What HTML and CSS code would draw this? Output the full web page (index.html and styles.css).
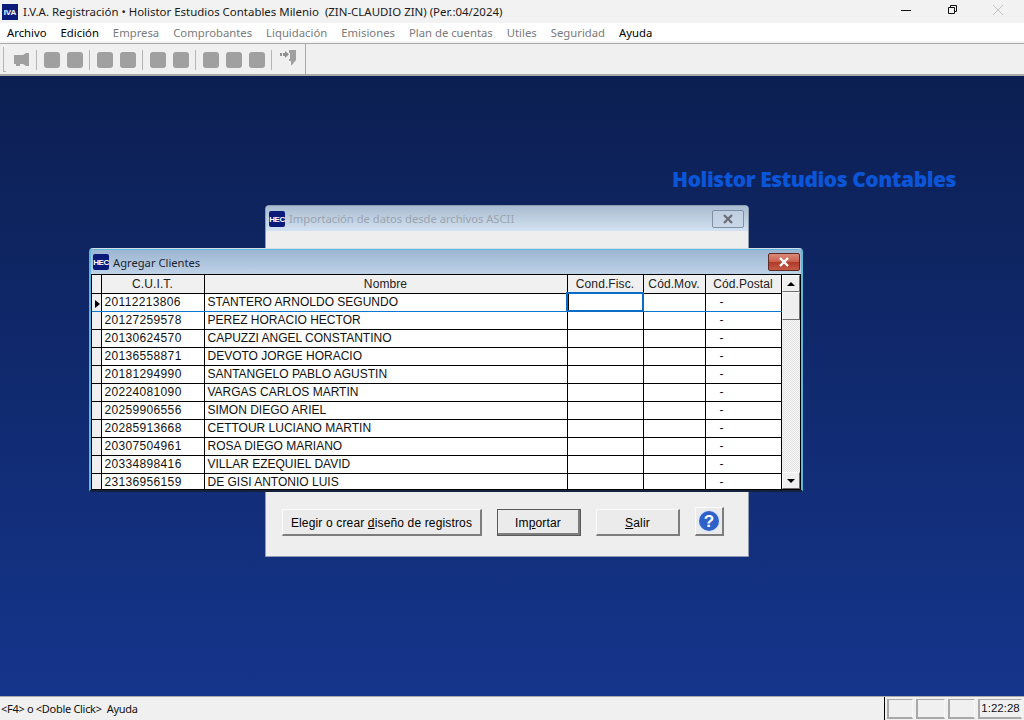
FILE: index.html
```html
<!DOCTYPE html>
<html>
<head>
  <title>I.V.A. Registración</title>
  <link rel="stylesheet" href="styles.css">
</head>
<body>
  <div class="app">
    <div class="titlebar">
      <span class="app-icon">IVA</span>
      <span class="title-text">I.V.A. Registración • Holistor Estudios Contables Milenio &nbsp;(ZIN-CLAUDIO ZIN) (Per.:04/2024)</span>
      <div class="win-buttons">
        <svg width="46" height="23" viewBox="0 0 46 23"><path d="M18 10.500h10" stroke="#111" fill="none"/></svg>
        <svg width="46" height="23" viewBox="0 0 46 23"><path d="M19.500 7.500h6v6h-6zM21.500 7.500v-2h6v6h-2" stroke="#111" fill="none"/></svg>
        <svg width="46" height="23" viewBox="0 0 46 23"><path d="M18 5l10 10M28 5l-10 10" stroke="#c4c4c4" fill="none"/></svg>
      </div>
    </div>

    <div class="menubar">
      <span class="on">Archivo</span>
      <span class="on">Edición</span>
      <span>Empresa</span>
      <span>Comprobantes</span>
      <span>Liquidación</span>
      <span>Emisiones</span>
      <span>Plan de cuentas</span>
      <span>Utiles</span>
      <span>Seguridad</span>
      <span class="on">Ayuda</span>
    </div>

    <div class="toolbar">
      <div class="tools">
        <span class="grip"></span>
        <svg class="tool-icon" width="18" height="18" viewBox="0 0 18 18"><path d="M1 4h9l3-2h3v13h-3l-3-2H7v2H3v-2H1z" fill="#a0a0a0"/></svg>
        <span class="sep"></span>
        <span class="tool"></span><span class="tool"></span>
        <span class="sep"></span>
        <span class="tool"></span><span class="tool"></span>
        <span class="sep"></span>
        <span class="tool"></span><span class="tool"></span>
        <span class="sep"></span>
        <span class="tool"></span><span class="tool"></span><span class="tool"></span>
        <span class="sep"></span>
        <svg class="tool-icon exit" width="18" height="18" viewBox="0 0 18 18"><path d="M10 0h7v10l-4 5h-1v-4h-2V9h1V3h-1z" fill="#a0a0a0"/><path d="M1 3h2v3H1zM4 3h2V1l4 3.250L6 8V6H4z" fill="#909090"/></svg>
      </div>
    </div>

    <div class="desktop">
      <div class="brand">Holistor Estudios Contables</div>

      <div class="window import-win">
        <div class="win-title light">
          <span class="hec">HEC</span>
          <span class="win-caption faded">Importación de datos desde archivos ASCII</span>
          <span class="close-btn idle"><svg width="14" height="10" viewBox="0 0 14 10"><path d="M3 1l8 8M11 1l-8 8" stroke="#6a6f78" stroke-width="2.400" fill="none"/></svg></span>
        </div>
        <div class="import-body">
          <button class="btn design">Elegir o crear <u>d</u>iseño de registros</button>
          <button class="btn import default">Im<u>p</u>ortar</button>
          <button class="btn salir"><u>S</u>alir</button>
          <button class="btn help">
            <svg width="24" height="24" viewBox="0 0 24 24"><circle cx="12" cy="12" r="11.500" fill="#dfe7fa"/><circle cx="12" cy="12" r="10" fill="#2f62c8"/><text x="12" y="17.500" text-anchor="middle" class="help-mark">?</text></svg>
          </button>
        </div>
      </div>

      <div class="window clients-win">
        <div class="win-title">
          <span class="hec">HEC</span>
          <span class="win-caption">Agregar Clientes</span>
          <span class="close-btn red"><svg width="14" height="10" viewBox="0 0 14 10"><path d="M3 1l8 8M11 1l-8 8" stroke="#fff" stroke-width="2.400" fill="none"/></svg></span>
        </div>
        <div class="grid-wrap">
          <table class="grid">
            <colgroup>
              <col class="c-ind"><col class="c-cuit"><col class="c-name"><col class="c-cond"><col class="c-mov"><col class="c-post">
            </colgroup>
            <thead>
              <tr><th></th><th>C.U.I.T.</th><th>Nombre</th><th>Cond.Fisc.</th><th>Cód.Mov.</th><th>Cód.Postal</th></tr>
            </thead>
            <tbody>
              <tr class="current"><td class="ind"><span class="arrow"></span></td><td class="cuit">20112213806</td><td>STANTERO ARNOLDO SEGUNDO</td><td class="focus"></td><td></td><td class="dash">-</td></tr>
              <tr><td class="ind"></td><td class="cuit">20127259578</td><td>PEREZ HORACIO HECTOR</td><td></td><td></td><td class="dash">-</td></tr>
              <tr><td class="ind"></td><td class="cuit">20130624570</td><td>CAPUZZI ANGEL CONSTANTINO</td><td></td><td></td><td class="dash">-</td></tr>
              <tr><td class="ind"></td><td class="cuit">20136558871</td><td>DEVOTO JORGE HORACIO</td><td></td><td></td><td class="dash">-</td></tr>
              <tr><td class="ind"></td><td class="cuit">20181294990</td><td>SANTANGELO PABLO AGUSTIN</td><td></td><td></td><td class="dash">-</td></tr>
              <tr><td class="ind"></td><td class="cuit">20224081090</td><td>VARGAS CARLOS MARTIN</td><td></td><td></td><td class="dash">-</td></tr>
              <tr><td class="ind"></td><td class="cuit">20259906556</td><td>SIMON DIEGO ARIEL</td><td></td><td></td><td class="dash">-</td></tr>
              <tr><td class="ind"></td><td class="cuit">20285913668</td><td>CETTOUR LUCIANO MARTIN</td><td></td><td></td><td class="dash">-</td></tr>
              <tr><td class="ind"></td><td class="cuit">20307504961</td><td>ROSA DIEGO MARIANO</td><td></td><td></td><td class="dash">-</td></tr>
              <tr><td class="ind"></td><td class="cuit">20334898416</td><td>VILLAR EZEQUIEL DAVID</td><td></td><td></td><td class="dash">-</td></tr>
              <tr><td class="ind"></td><td class="cuit">23136956159</td><td>DE GISI ANTONIO LUIS</td><td></td><td></td><td class="dash">-</td></tr>
            </tbody>
          </table>
          <div class="scrollbar">
            <span class="sb-btn"><span class="up"></span></span>
            <span class="sb-thumb"></span>
            <span class="sb-track"></span>
            <span class="sb-btn"><span class="down"></span></span>
          </div>
        </div>
      </div>
    </div>

    <div class="statusbar">
      <span class="status-text">&lt;F4&gt; o &lt;Doble Click&gt; &nbsp;Ayuda</span>
      <div class="panels">
        <span class="panel p1"></span>
        <span class="panel p2"></span>
        <span class="panel p3"></span>
        <span class="panel clock">1:22:28</span>
      </div>
    </div>
  </div>
</body>
</html>
```

FILE: styles.css
```css
* {
  box-sizing: border-box;
}
html, body {
  margin: 0;
  padding: 0;
  overflow: hidden;
}
body {
  font-family: "Noto Sans", sans-serif;
  font-size: 12px;
  color: #000;
}
.app {
  width: 1024px;
  height: 720px;
  display: flex;
  flex-direction: column;
  background: #f0f0f0;
}

/* title bar */
.titlebar {
  height: 23px;
  display: flex;
  align-items: center;
  background: #f2f2f2;
  padding-left: 2px;
}
.app-icon {
  width: 16px;
  height: 16px;
  background: #0c1b7a;
  color: #fff;
  font: bold 8px/17px "Liberation Sans", sans-serif;
  text-align: center;
  margin-right: 5px;
}
.title-text {
  flex: 1;
  font-size: 11.450px;
  color: #1a1a1a;
  white-space: nowrap;
}
.win-buttons {
  display: flex;
  margin-right: 3px;
}

/* menu */
.menubar {
  height: 18px;
  background: #fff;
  display: flex;
  align-items: center;
  gap: 14px;
  padding-left: 7px;
  font-size: 11.300px;
  color: #7a7a7a;
  white-space: nowrap;
}
.menubar .on {
  color: #000;
}

.toolbar {
  height: 35px;
  padding-top: 2px;
  background: #f0f0f0;
  border-bottom: 2px solid #a9a9a9;
  box-shadow: inset 0 2px 0 #f5f5f5, inset 0 3px 0 #a9a9a9;
  display: flex;
}
.tools {
  width: 306px;
  height: 31px;
  margin-top: 1px;
  border-right: 1px solid #a9a9a9;
  display: flex;
  align-items: center;
  padding-left: 3px;
}
.grip {
  width: 3px;
  height: 25px;
  border-left: 1px solid #b5b5b5;
  border-bottom: 1px solid #b5b5b5;
  margin-right: 7px;
}
.tool-icon {
  flex: none;
}
.tool-icon.exit {
  margin-bottom: 2px;
}
.tool {
  width: 16px;
  height: 16px;
  background: #a0a0a0;
  border-radius: 3px;
  margin-right: 7px;
}
.sep {
  width: 1px;
  height: 20px;
  background: #b5b5b5;
  margin: 0 7px 0 5px;
}
.tool + .sep {
  margin-left: -1px;
}

/* desktop */
.desktop {
  position: relative;
  flex: 1;
  background: linear-gradient(#0c1f52, #15358c);
}
.brand {
  position: absolute;
  left: 672px;
  top: 90px;
  font: 800 21px/26px "Open Sans", sans-serif;
  letter-spacing: -0.460px;
  color: #0b55d8;
  white-space: nowrap;
}

/* windows */
.window {
  position: absolute;
  border-radius: 4px 4px 0 0;
}
.import-win {
  left: 265px;
  top: 129px;
  width: 484px;
  height: 352px;
  background: #eeeeee;
  border: 1px solid #8e9bb0;
  box-shadow: inset 0 1px 0 #e8edf4;
}
.clients-win {
  left: 89px;
  top: 172px;
  width: 714px;
  height: 244px;
  background: linear-gradient(#a4bbd5, #b9cde4);
  border: 1px solid #5fb7dc;
  border-top-color: #d5dde8;
  border-bottom: 2px solid #12223f;
  box-shadow: inset 0 0 0 1px #5fb7dc;
}
.win-title {
  height: 24px;
  display: flex;
  align-items: center;
  padding: 0 1px 0 2px;
  background: linear-gradient(#9cb5d1, #bed2e8);
  border-radius: 3px 3px 0 0;
  margin: 1px 1px 0;
}
.win-title.light {
  height: 25px;
  margin: 0;
  padding-left: 3px;
  background: linear-gradient(#a9bcd0, #d3e2f2);
}
.hec {
  width: 16px;
  height: 16px;
  background: #0a1a78;
  color: #fff;
  font: bold 8px/17px "Liberation Sans", sans-serif;
  letter-spacing: -0.500px;
  text-align: center;
  border-radius: 2px;
  margin-right: 4px;
  overflow: hidden;
}
.win-caption {
  flex: 1;
  color: #1c2430;
  font-size: 11.200px;
  white-space: nowrap;
}
.win-caption.faded {
  color: #9aa3af;
}
.close-btn {
  width: 32px;
  height: 18px;
  display: flex;
  align-items: center;
  justify-content: center;
  border-radius: 2px;
}
.close-btn.red {
  background: linear-gradient(#d98a78 0, #c9604c 48%, #b03a2a 52%, #c45a44 100%);
  border: 1px solid #5e2a25;
}
.close-btn.idle {
  border: 1px solid #7f8fa6;
  background: linear-gradient(#bfcfe0, #c9d8e8);
  margin-right: 3px;
}

/* import dialog buttons */
.import-body {
  position: relative;
  height: 325px;
}
.btn {
  position: absolute;
  top: 278px;
  height: 27px;
  background: #ebebeb;
  border: 1px solid;
  border-color: #fafafa #7d7d7d #7d7d7d #fafafa;
  border-width: 1px 2px 2px 1px;
  font: 12px "Liberation Sans", sans-serif;
  letter-spacing: 0.150px;
  color: #000;
  padding: 1px 0 0;
}
.design {
  left: 16px;
  width: 200px;
}
.import {
  left: 231px;
  width: 84px;
}
.default {
  outline: 1px solid #5a5a5a;
  outline-offset: -1px;
  border-width: 1px 3px 3px 1px;
  padding-top: 2px;
}
.salir {
  left: 330px;
  width: 84px;
}
.help {
  left: 429px;
  top: 276px;
  width: 29px;
  height: 29px;
  padding: 0;
  display: flex;
  align-items: center;
  justify-content: center;
}
.help-mark {
  font: bold 17px "Liberation Sans", sans-serif;
  fill: #fff;
}

/* clients grid */
.grid-wrap {
  display: flex;
  margin: 0 1px;
  background: #fff;
  border: 1px solid #000;
  height: 216px;
  overflow: hidden;
}
.grid {
  width: 689px;
  table-layout: fixed;
  border-collapse: collapse;
  font: 12px "Liberation Sans", sans-serif;
}
.c-ind { width: 9px; }
.c-cuit { width: 103px; }
.c-name { width: 363px; }
.c-cond { width: 76px; }
.c-mov { width: 62px; }
.c-post { width: 76px; }
.grid th {
  height: 18px;
  padding: 0;
  font-weight: normal;
  letter-spacing: 0.100px;
  background: #f0f0f0;
  border-right: 1px solid #000;
  border-bottom: 1px solid #000;
  color: #222;
}
.grid td {
  height: 18px;
  padding: 0 0 0 3px;
  border-right: 1px solid #000;
  border-bottom: 1px solid #000;
  white-space: nowrap;
  overflow: hidden;
  color: #111;
}
.grid td.ind {
  background: #f0f0f0;
  padding: 0;
}
.grid td.cuit {
  letter-spacing: 0.340px;
}
.grid td.dash {
  padding-left: 14px;
}
.current td {
  border-bottom: 1px solid #0a78d0;
}
.grid td.focus {
  border: 2px solid #0a6cc4;
  box-shadow: inset 1px 0 0 #000;
}
.arrow {
  display: block;
  width: 0;
  height: 0;
  margin: 4px 0 0 3px;
  border-left: 5px solid #000;
  border-top: 4px solid transparent;
  border-bottom: 4px solid transparent;
}

/* scrollbar */
.scrollbar {
  width: 19px;
  display: flex;
  flex-direction: column;
  background: #f4f4f4;
}
.sb-btn, .sb-thumb {
  display: flex;
  align-items: center;
  justify-content: center;
  background: #efefef;
  border: 1px solid;
  border-color: #fafafa #6f6f6f #6f6f6f #fafafa;
  flex: none;
}
.sb-btn {
  height: 17px;
}
.sb-thumb {
  height: 28px;
}
.sb-track {
  flex: 1;
  background: repeating-conic-gradient(#f6f6f6 0 25%, #e4e4e4 0 50%) 0 0 / 2px 2px;
}
.up {
  border-left: 4px solid transparent;
  border-right: 4px solid transparent;
  border-bottom: 4px solid #000;
}
.down {
  border-left: 4px solid transparent;
  border-right: 4px solid transparent;
  border-top: 4px solid #000;
}

/* status bar */
.statusbar {
  height: 24px;
  background: #f0f0f0;
  border-top: 1px solid #a9a9a9;
  display: flex;
  align-items: center;
}
.status-text {
  flex: 1;
  padding-left: 1px;
  color: #111;
  font-size: 11px;
  letter-spacing: -0.300px;
  white-space: nowrap;
}
.panels {
  height: 23px;
  display: flex;
  align-items: center;
  gap: 3px;
  border-left: 1px solid #000;
  padding-left: 2px;
  margin-right: 2px;
}
.panel {
  height: 20px;
  margin-top: 1px;
  border: 1px solid;
  border-color: #a9a9a9 #f8f8f8 #a9a9a9 #a9a9a9;
  border-width: 1px 1px 2px 2px;
}
.p1 { width: 26px; }
.p2 { width: 29px; }
.p3 { width: 27px; }
.clock {
  width: 44px;
  text-align: center;
  font: 11.500px/17px "Liberation Sans", sans-serif;
  color: #111;
}
```
